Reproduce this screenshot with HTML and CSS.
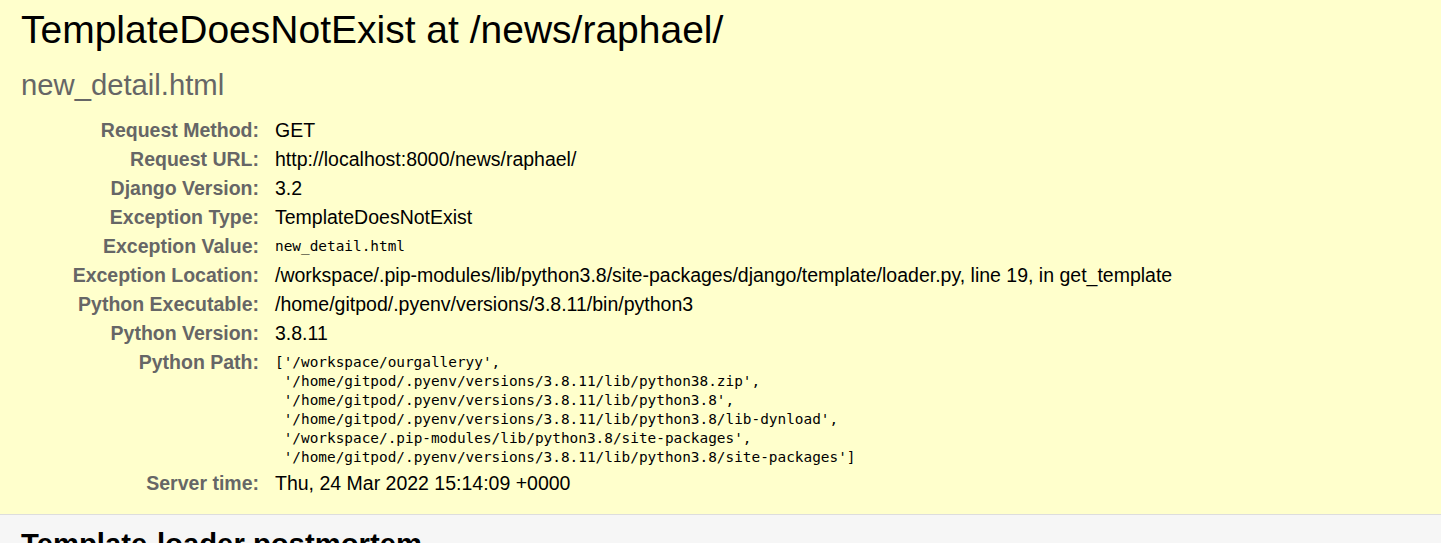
FILE: index.html
```html
<!DOCTYPE html>
<html>
<head>
<meta charset="utf-8">
<title>TemplateDoesNotExist at /news/raphael/</title>
<link rel="stylesheet" href="styles.css">
</head>
<body>
<div id="summary" class="section">
  <h1 class="title">TemplateDoesNotExist at /news/raphael/</h1>
  <h2 class="subtitle">new_detail.html</h2>
  <table class="meta">
    <tbody>
      <tr><th>Request Method:</th><td>GET</td></tr>
      <tr><th>Request URL:</th><td>http://localhost:8000/news/raphael/</td></tr>
      <tr><th>Django Version:</th><td>3.2</td></tr>
      <tr><th>Exception Type:</th><td>TemplateDoesNotExist</td></tr>
      <tr><th>Exception Value:</th><td><pre class="code">new_detail.html</pre></td></tr>
      <tr><th>Exception Location:</th><td><span class="fname">/workspace/.pip-modules/lib/python3.8/site-packages/django/template/loader.py</span>, line 19, in get_template</td></tr>
      <tr><th>Python Executable:</th><td>/home/gitpod/.pyenv/versions/3.8.11/bin/python3</td></tr>
      <tr><th>Python Version:</th><td>3.8.11</td></tr>
      <tr><th>Python Path:</th><td><pre class="code path">['/workspace/ourgalleryy',
 '/home/gitpod/.pyenv/versions/3.8.11/lib/python38.zip',
 '/home/gitpod/.pyenv/versions/3.8.11/lib/python3.8',
 '/home/gitpod/.pyenv/versions/3.8.11/lib/python3.8/lib-dynload',
 '/workspace/.pip-modules/lib/python3.8/site-packages',
 '/home/gitpod/.pyenv/versions/3.8.11/lib/python3.8/site-packages']</pre></td></tr>
      <tr><th>Server time:</th><td>Thu, 24 Mar 2022 15:14:09 +0000</td></tr>
    </tbody>
  </table>
</div>
<div id="template-not-exist" class="section alt">
  <h2 class="section-title">Template-loader postmortem</h2>
  <p class="note">Django tried loading these templates, in this order:</p>
</div>
</body>
</html>
```

FILE: styles.css
```css
html, body { margin: 0; padding: 0; }
body {
  font-family: "Liberation Sans", Arial, sans-serif;
  font-size: 19.5px;
  color: #000;
  background: #fff;
}
.section {
  padding: 7px 21px 16px 21px;
  border-bottom: 1px solid #ddd;
}
#summary { background: #ffc; }
.alt { background: #f6f6f6; padding-top: 12px; }
.title {
  margin: 0;
  font-weight: normal;
  font-size: 39px;
  line-height: 46px;
}
.subtitle {
  margin: 15px 0 14px 0;
  font-weight: normal;
  font-size: 29.25px;
  line-height: 34px;
  color: #666;
}
.meta {
  border: none;
  border-collapse: collapse;
  background: transparent;
}
.meta th, .meta td {
  vertical-align: top;
  padding: 3px 4px;
  line-height: 23px;
}
.meta th {
  width: 234px;
  text-align: right;
  color: #666;
  font-weight: bold;
  padding-right: 12px;
}
.code {
  margin: 0;
  padding-top: 2px;
  font-family: "DejaVu Sans Mono", monospace;
  font-size: 14.4px;
  line-height: 19px;
  white-space: pre-wrap;
}
.path { margin-bottom: -1px; }
.section-title {
  margin: 0 0 16px 0;
  font-size: 29.25px;
  line-height: 34px;
}
.note { margin: 0; }
```
